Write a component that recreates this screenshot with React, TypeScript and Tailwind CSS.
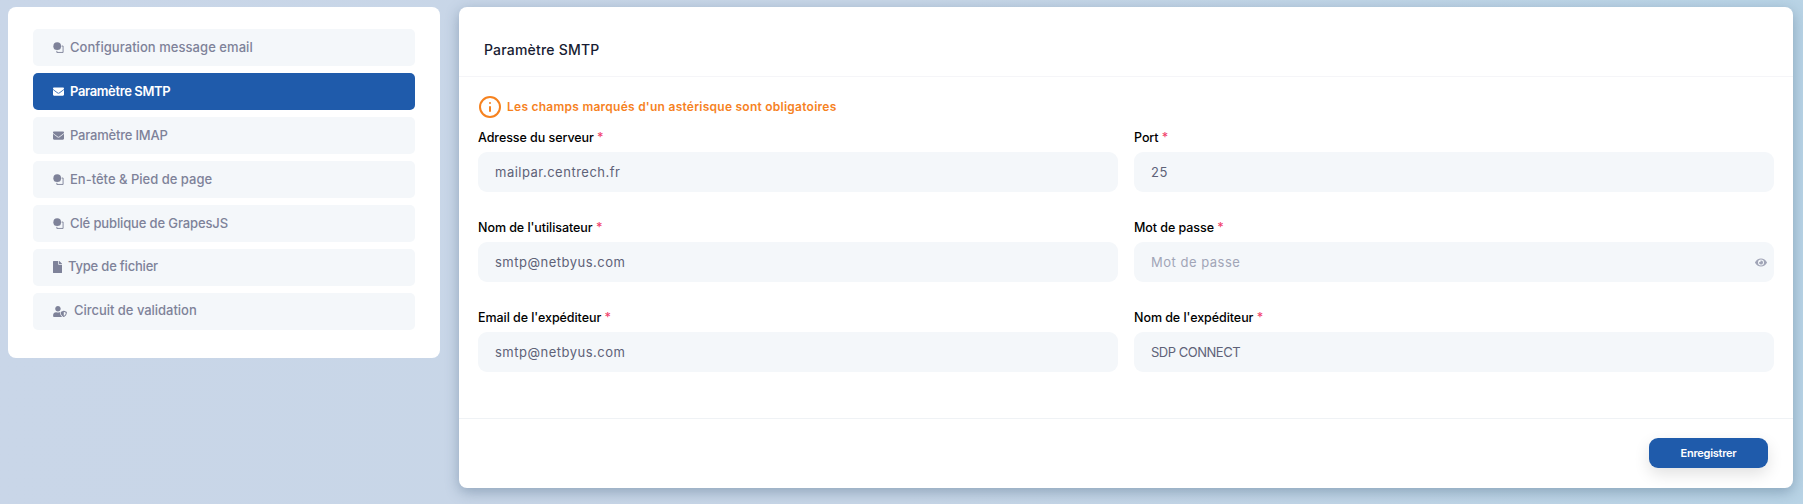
import React from "react";
import { FaEnvelope, FaFile, FaUserShield, FaEye } from "react-icons/fa";
import { Info } from "lucide-react";

const font = { fontFamily: "Inter, 'Noto Sans', sans-serif" };

function BubbleIcon({ className }: { className?: string }) {
  return (
    <svg viewBox="0 0 12 12" className={className} fill="none">
      <circle cx="4.6" cy="4.6" r="4.2" fill="currentColor" />
      <path d="M9.4 4.4h1.6v7H4.2V9.6" stroke="currentColor" strokeWidth="1" />
    </svg>
  );
}

type Item = { label: string; icon: "bubble" | "mail" | "file" | "user"; active?: boolean; track: string };

const items: Item[] = [
  { label: "Configuration message email", icon: "bubble", track: "tracking-[0.05px]" },
  { label: "Paramètre SMTP", icon: "mail", active: true, track: "tracking-[-0.37px]" },
  { label: "Paramètre IMAP", icon: "mail", track: "tracking-[-0.2px]" },
  { label: "En-tête & Pied de page", icon: "bubble", track: "tracking-[0px]" },
  { label: "Clé publique de GrapesJS", icon: "bubble", track: "tracking-[-0.13px]" },
  { label: "Type de fichier", icon: "file", track: "tracking-[-0.2px]" },
  { label: "Circuit de validation", icon: "user", track: "tracking-[-0.03px]" },
];

function NavIcon({ icon }: { icon: Item["icon"] }) {
  if (icon === "bubble") return <BubbleIcon className="w-[11px] h-[11px] mr-[6px]" />;
  if (icon === "mail") return <FaEnvelope className="w-[11px] h-[11px] mr-[6px]" />;
  if (icon === "file") return <FaFile className="w-[9px] h-[12px] mr-[6px]" />;
  return <FaUserShield className="w-[14px] h-[11px] mr-[7px]" />;
}

function Field({
  label,
  value,
  placeholder,
  eye,
  tight,
}: {
  label: string;
  value?: string;
  placeholder?: string;
  eye?: boolean;
  tight?: boolean;
}) {
  return (
    <div className="flex flex-col">
      <label className="h-[24px] text-[12.5px] leading-[20px] font-medium text-black tracking-[-0.06px]">
        {label} <span className="text-[#f1416c]">*</span>
      </label>
      <div className="relative">
        <input
          readOnly
          defaultValue={value}
          placeholder={placeholder}
          className={
            tight
              ? "w-full h-[40px] rounded-[9px] bg-[#f4f7fa] pl-[17px] pr-[30px] text-[13px] font-normal text-[#5e6278] outline-none tracking-[-0.48px]"
              : "w-full h-[40px] rounded-[9px] bg-[#f4f7fa] pl-[17px] pr-[30px] text-[13px] font-normal text-[#5e6278] placeholder:text-[#a1a5b7] outline-none tracking-[0.5px]"
          }
          style={font}
        />
        {eye && <FaEye className="absolute right-[7px] top-[15px] w-[12px] h-[11px] text-[#a1a5b7]" />}
      </div>
    </div>
  );
}

export default function App() {
  return (
    <div
      className="h-[504px] w-full flex items-start gap-[19px] pt-[7px] pl-[8px] bg-gradient-to-r from-[#c9d6e8] via-[#c7d6e7] to-[#b9d4e6] overflow-hidden"
      style={font}
    >
      <aside className="w-[432px] h-[351px] shrink-0 rounded-[8px] bg-white px-[25px] pt-[22px] flex flex-col gap-[6.95px]">
        {items.map((it) => (
          <div
            key={it.label}
            className={
              it.active
                ? "h-[37px] rounded-[5px] bg-[#1f5bab] text-white font-semibold flex items-center pl-[20px] text-[13px]"
                : "h-[37px] rounded-[5px] bg-[#f4f7fa] text-[#7e8299] font-medium flex items-center pl-[20px] text-[13px]"
            }
          >
            <NavIcon icon={it.icon} />
            <span className={it.track}>{it.label}</span>
          </div>
        ))}
      </aside>

      <main className="w-[1334px] h-[481px] shrink-0 rounded-[8px] bg-white shadow-[0_4px_14px_rgba(60,90,120,0.4)] flex flex-col">
        <header className="h-[70px] border-b border-[#f5f5f8] flex items-center pl-[25px] pt-[16px] text-[14px] font-medium text-[#181c32] tracking-[0.2px]">
          Paramètre SMTP
        </header>
        <section className="h-[342px] border-b border-[#eff2f5] px-[19px]">
          <div className="flex items-center gap-[5px] mt-[18px] h-[24px]">
            <Info className="w-[24px] h-[24px] text-[#f6821f]" strokeWidth={2} />
            <span className="text-[12px] font-semibold text-[#f6821f] tracking-[0.25px]">
              Les champs marqués d'un astérisque sont obligatoires
            </span>
          </div>
          <div className="grid grid-cols-2 gap-x-[16px] gap-y-[26px] mt-[9px]">
            <Field label="Adresse du serveur" value="mailpar.centrech.fr" />
            <Field label="Port" value="25" />
            <Field label="Nom de l'utilisateur" value="smtp@netbyus.com" />
            <Field label="Mot de passe" placeholder="Mot de passe" eye />
            <Field label="Email de l'expéditeur" value="smtp@netbyus.com" />
            <Field label="Nom de l'expéditeur" value="SDP CONNECT" tight />
          </div>
        </section>
        <footer className="flex-1 flex justify-end items-start pt-[19px] pr-[25px]">
          <button className="w-[119px] h-[30px] rounded-[9px] bg-[#1f5bab] text-white text-[11px] font-semibold tracking-[-0.25px] shadow-[0_6px_16px_rgba(0,0,0,0.12)]">
            Enregistrer
          </button>
        </footer>
      </main>
    </div>
  );
}
